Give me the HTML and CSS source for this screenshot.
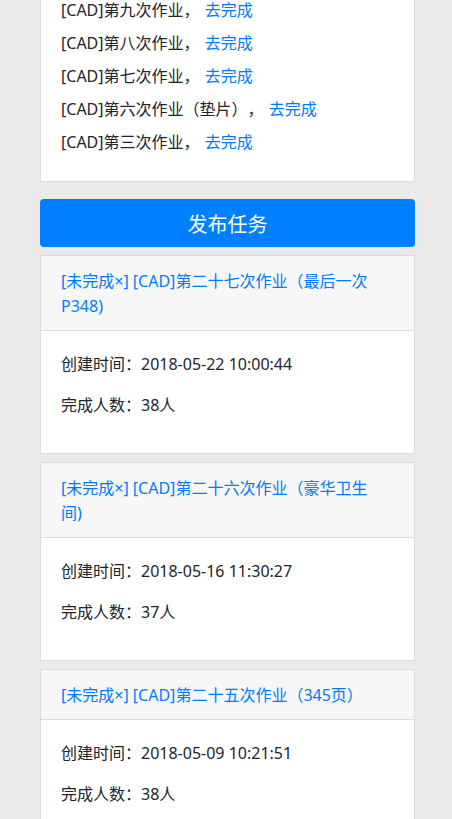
FILE: index.html
```html
<!DOCTYPE html>
<html lang="zh-CN">
<head>
<meta charset="utf-8">
<title>任务</title>
<link rel="stylesheet" href="styles.css">
</head>
<body>
<div class="page">
  <div class="card todo-card">
    <ul class="todo-list">
      <li>[CAD]第九次作业， <a class="link" href="#">去完成</a></li>
      <li>[CAD]第八次作业， <a class="link" href="#">去完成</a></li>
      <li>[CAD]第七次作业， <a class="link" href="#">去完成</a></li>
      <li>[CAD]第六次作业（垫片）， <a class="link" href="#">去完成</a></li>
      <li>[CAD]第三次作业， <a class="link" href="#">去完成</a></li>
    </ul>
  </div>

  <button class="btn-primary" type="button">发布任务</button>

  <div class="card task-card">
    <div class="card-header"><a class="link" href="#">[未完成×] [CAD]第二十七次作业（最后一次P348)</a></div>
    <div class="card-body">
      <p>创建时间：2018-05-22 10:00:44</p>
      <p>完成人数：38人</p>
    </div>
  </div>

  <div class="card task-card">
    <div class="card-header"><a class="link" href="#">[未完成×] [CAD]第二十六次作业（豪华卫生间)</a></div>
    <div class="card-body">
      <p>创建时间：2018-05-16 11:30:27</p>
      <p>完成人数：37人</p>
    </div>
  </div>

  <div class="card task-card">
    <div class="card-header"><a class="link" href="#">[未完成×] [CAD]第二十五次作业（345页）</a></div>
    <div class="card-body">
      <p>创建时间：2018-05-09 10:21:51</p>
      <p>完成人数：38人</p>
    </div>
  </div>
</div>
</body>
</html>
```

FILE: styles.css
```css
html, body {
  margin: 0;
  padding: 0;
  background: #eaeaea;
}

body {
  font-family: "Noto Sans", "Noto Sans CJK SC", sans-serif;
  font-size: 16px;
  color: #212529;
  overflow: hidden;
  text-spacing-trim: space-all;
}

.page {
  width: 375px;
  margin-left: 40px;
  display: flex;
  flex-direction: column;
}

.card {
  background: #fff;
  border: 1px solid #dcdcdc;
  box-sizing: border-box;
}

.todo-card {
  margin-top: -25px;
  padding: 18px 20px 22px;
}

.todo-list {
  list-style: none;
  margin: 0;
  padding: 0;
}

.todo-list li {
  height: 33px;
  line-height: 33px;
  white-space: nowrap;
}

.link {
  color: #007bff;
  text-decoration: none;
}

.todo-list .link {
  margin-left: 1px;
}

.btn-primary {
  margin-top: 17px;
  margin-bottom: 8px;
  height: 48px;
  width: 100%;
  border: 0;
  border-radius: 4px;
  background: #0080ff;
  color: #fff;
  font-family: "Noto Sans CJK SC", "Noto Sans", sans-serif;
  font-size: 20px;
  padding: 0;
  cursor: pointer;
}

.task-card {
  margin-bottom: 8px;
}

.card-header {
  background: #f7f7f7;
  border-bottom: 1px solid #dcdcdc;
  padding: 13px 27px 11px 20px;
  line-height: 25px;
}

.card-body {
  padding: 21px 20px 19px;
}

.card-body p {
  margin: 0 0 16px;
  line-height: 25px;
}
```
